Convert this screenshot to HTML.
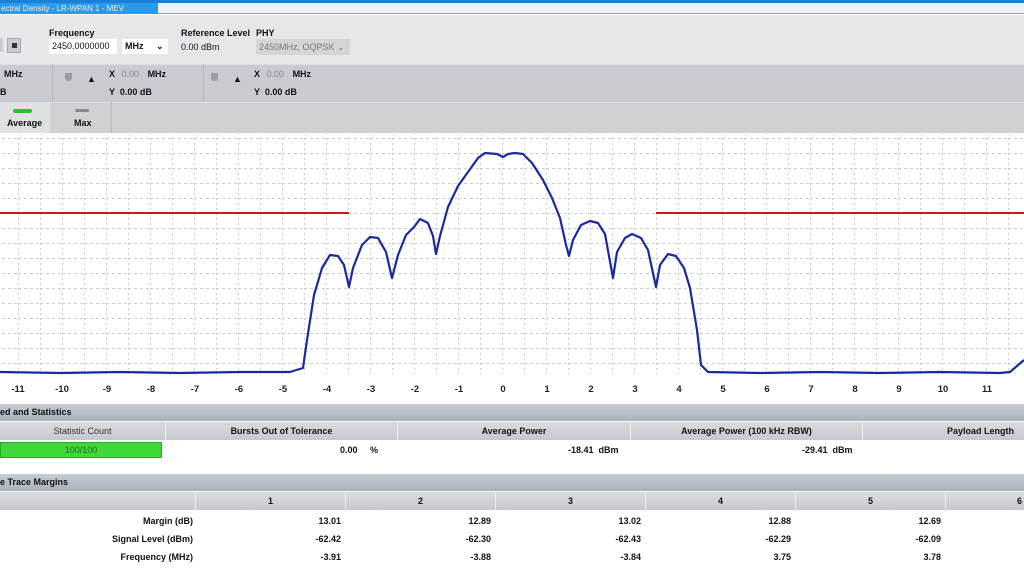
<!DOCTYPE html>
<html><head><meta charset="utf-8"><style>
*{margin:0;padding:0;box-sizing:border-box}
body{width:1024px;height:576px;overflow:hidden;background:#fff;font-family:"Liberation Sans",sans-serif;font-size:9px;color:#111;position:relative}
.a{position:absolute}
.b{font-weight:bold}
</style></head><body>
<div class="a" style="left:0;top:0;width:1024px;height:3px;background:#1a7fd6"></div>
<div class="a" style="left:0;top:3px;width:1024px;height:11px;background:#eef2f6;border-bottom:1px solid #9aa3ad"></div>
<div class="a" style="left:0;top:3px;width:158px;height:11px;background:#2b9ae8;color:#e8f2ff;font-size:8px;line-height:11px;padding-left:1px">ectral Density - LR-WPAN 1 - MEV</div>
<div class="a" style="left:0;top:15px;width:1024px;height:49px;background:#e6e7ea"></div>
<div class="a" style="left:0;top:38px;width:3px;height:14px;background:#c8ccd0"></div>
<div class="a" style="left:7px;top:38px;width:14px;height:15px;background:#c8ccd0;border:1px solid #aaa"><div style="margin:4px auto;width:5px;height:5px;background:#333"></div></div>
<div class="a b" style="left:49px;top:28px">Frequency</div>
<div class="a" style="left:49px;top:39px;width:68px;height:15px;background:#fff;line-height:15px;padding-left:3px">2450.0000000</div>
<div class="a b" style="left:122px;top:39px;width:46px;height:15px;background:#fff;line-height:15px;padding-left:3px">MHz <span style="margin-left:10px">&#8964;</span></div>
<div class="a b" style="left:181px;top:28px">Reference Level</div>
<div class="a" style="left:181px;top:42px">0.00 dBm</div>
<div class="a b" style="left:256px;top:28px">PHY</div>
<div class="a" style="left:256px;top:39px;width:94px;height:16px;background:#d4d5d8;color:#777;line-height:16px;padding-left:3px">2450MHz, OQPSK &#8964;</div>
<div class="a" style="left:0;top:64px;width:1024px;height:38px;background:#c8ccd0;border-top:1px solid #dde"></div>
<div class="a" style="left:52px;top:64px;width:1px;height:38px;background:#b5b9bd"></div>
<div class="a" style="left:203px;top:64px;width:1px;height:38px;background:#b5b9bd"></div>
<div class="a b" style="left:4px;top:69px">MHz</div>
<div class="a b" style="left:0;top:87px">B</div>
<div class="a" style="left:65px;top:73px;width:7px;height:8px;background:#9a9ea3;border-radius:1px 1px 3px 3px"></div>
<div class="a" style="left:87px;top:74px;font-size:9px">&#9650;</div>
<div class="a b" style="left:109px;top:69px">X <span style="color:#888;font-weight:normal;margin-left:4px">0.00</span> <span style="margin-left:6px">MHz</span></div>
<div class="a b" style="left:109px;top:87px">Y &nbsp;0.00 dB</div>
<div class="a" style="left:211px;top:73px;width:7px;height:8px;background:#9a9ea3;border-radius:1px 1px 3px 3px"></div>
<div class="a" style="left:233px;top:74px;font-size:9px">&#9650;</div>
<div class="a b" style="left:254px;top:69px">X <span style="color:#888;font-weight:normal;margin-left:4px">0.00</span> <span style="margin-left:6px">MHz</span></div>
<div class="a b" style="left:254px;top:87px">Y &nbsp;0.00 dB</div>
<div class="a" style="left:0;top:102px;width:1024px;height:31px;background:#cfd2d5;border-top:1px solid #e0e2e4"></div>
<div class="a" style="left:0;top:102px;width:50px;height:31px;background:#dfe1e3"></div>
<div class="a" style="left:13px;top:109px;width:19px;height:4px;background:#2fbf3a;border-radius:2px"></div>
<div class="a b" style="left:7px;top:118px">Average</div>
<div class="a" style="left:75px;top:109px;width:14px;height:3px;background:#888;border-radius:2px"></div>
<div class="a b" style="left:74px;top:118px">Max</div>
<div class="a" style="left:111px;top:102px;width:1px;height:31px;background:#b8bbbe"></div>
<svg class="a" style="left:0;top:133px" width="1024" height="270" viewBox="0 133 1024 270">
<defs><pattern id="g" x="18" y="153" width="22" height="15" patternUnits="userSpaceOnUse">
<line x1="0.5" y1="0" x2="0.5" y2="15" stroke="#aaa" stroke-width="1" stroke-dasharray="2,3"/>
<line x1="0" y1="0.5" x2="22" y2="0.5" stroke="#aaa" stroke-width="1" stroke-dasharray="3,3"/>
</pattern></defs>
<rect x="0" y="134" width="1024" height="240" fill="url(#g)" opacity="0.6"/>
<line x1="0" y1="213" x2="349" y2="213" stroke="#d01818" stroke-width="2"/>
<line x1="656" y1="213" x2="1024" y2="213" stroke="#d01818" stroke-width="2"/>
<polyline fill="none" stroke="#1a2a9a" stroke-width="2.2" stroke-linejoin="round" points="0,372 60,373 120,372 180,373 240,372 290,372 303,368 307,340 314,295 322,268 330,255 338,256 344,265 349,287 353,268 362,245 370,237 378,238 386,252 392,278 398,255 406,235 414,227 420,219 428,223 433,236 436,254 440,236 448,207 458,186 468,172 478,158 485,153 497,154 503,157 508,154 515,153 523,154 532,163 543,180 552,198 560,218 566,245 569,256 573,240 581,225 590,221 598,223 605,234 613,278 617,252 625,238 632,234 641,238 648,250 656,287 660,265 668,254 676,256 684,268 690,288 697,330 701,365 708,372 760,373 820,372 880,373 940,372 1000,373 1010,372 1024,360"/>
<g font-size="9.5" font-weight="bold" fill="#222" text-anchor="middle">
<text x="18" y="392">-11</text><text x="62" y="392">-10</text><text x="107" y="392">-9</text><text x="151" y="392">-8</text><text x="195" y="392">-7</text><text x="239" y="392">-6</text><text x="283" y="392">-5</text><text x="327" y="392">-4</text><text x="371" y="392">-3</text><text x="415" y="392">-2</text><text x="459" y="392">-1</text><text x="503" y="392">0</text><text x="547" y="392">1</text><text x="591" y="392">2</text><text x="635" y="392">3</text><text x="679" y="392">4</text><text x="723" y="392">5</text><text x="767" y="392">6</text><text x="811" y="392">7</text><text x="855" y="392">8</text><text x="899" y="392">9</text><text x="943" y="392">10</text><text x="987" y="392">11</text>
</g></svg>
<div class="a b" style="left:0;top:404px;width:1024px;height:17px;background:linear-gradient(#c6ccd2,#a9b3bc);line-height:17px">ed and Statistics</div>
<div class="a" style="left:0;top:422px;width:1024px;height:18px;background:linear-gradient(#dadde0,#c5c9cd)"></div>
<div class="a" style="left:0;top:422px;width:165px;height:18px;line-height:18px;text-align:center;color:#333">Statistic Count</div>
<div class="a b" style="left:165px;top:422px;width:232px;height:18px;line-height:18px;text-align:center;border-left:1px solid #eee">Bursts Out of Tolerance</div>
<div class="a b" style="left:397px;top:422px;width:233px;height:18px;line-height:18px;text-align:center;border-left:1px solid #eee">Average Power</div>
<div class="a b" style="left:630px;top:422px;width:232px;height:18px;line-height:18px;text-align:center;border-left:1px solid #eee">Average Power (100 kHz RBW)</div>
<div class="a b" style="left:862px;top:422px;width:162px;height:18px;line-height:18px;text-align:right;padding-right:10px;border-left:1px solid #eee">Payload Length</div>
<div class="a" style="left:0;top:442px;width:162px;height:16px;background:#3ed83a;border:1px solid #2aa82a;line-height:14px;text-align:center;color:#2a6a2a">100/100</div>
<div class="a b" style="left:340px;top:445px">0.00 &nbsp;&nbsp;&nbsp;&nbsp;%</div>
<div class="a b" style="left:568px;top:445px">-18.41 &nbsp;dBm</div>
<div class="a b" style="left:802px;top:445px">-29.41 &nbsp;dBm</div>
<div class="a b" style="left:0;top:474px;width:1024px;height:17px;background:linear-gradient(#c6ccd2,#a9b3bc);line-height:17px">e Trace Margins</div>
<div class="a" style="left:0;top:492px;width:1024px;height:18px;background:linear-gradient(#dadde0,#c5c9cd)"></div>
<div class="a b" style="left:195px;top:492px;width:150px;height:18px;line-height:18px;text-align:center;border-left:1px solid #eee">1</div>
<div class="a b" style="left:345px;top:492px;width:150px;height:18px;line-height:18px;text-align:center;border-left:1px solid #eee">2</div>
<div class="a b" style="left:495px;top:492px;width:150px;height:18px;line-height:18px;text-align:center;border-left:1px solid #eee">3</div>
<div class="a b" style="left:645px;top:492px;width:150px;height:18px;line-height:18px;text-align:center;border-left:1px solid #eee">4</div>
<div class="a b" style="left:795px;top:492px;width:150px;height:18px;line-height:18px;text-align:center;border-left:1px solid #eee">5</div>
<div class="a b" style="left:945px;top:492px;width:79px;height:18px;line-height:18px;text-align:right;padding-right:2px;border-left:1px solid #eee">6</div>
<div class="a b" style="top:512px;left:0;width:1024px;line-height:18px">
<div style="display:flex"><div style="width:193px;text-align:right">Margin (dB)</div><div style="width:148px;text-align:right">13.01</div><div style="width:150px;text-align:right">12.89</div><div style="width:150px;text-align:right">13.02</div><div style="width:150px;text-align:right">12.88</div><div style="width:150px;text-align:right">12.69</div></div>
<div style="display:flex"><div style="width:193px;text-align:right">Signal Level (dBm)</div><div style="width:148px;text-align:right">-62.42</div><div style="width:150px;text-align:right">-62.30</div><div style="width:150px;text-align:right">-62.43</div><div style="width:150px;text-align:right">-62.29</div><div style="width:150px;text-align:right">-62.09</div></div>
<div style="display:flex"><div style="width:193px;text-align:right">Frequency (MHz)</div><div style="width:148px;text-align:right">-3.91</div><div style="width:150px;text-align:right">-3.88</div><div style="width:150px;text-align:right">-3.84</div><div style="width:150px;text-align:right">3.75</div><div style="width:150px;text-align:right">3.78</div></div>
</div>
</body></html>
